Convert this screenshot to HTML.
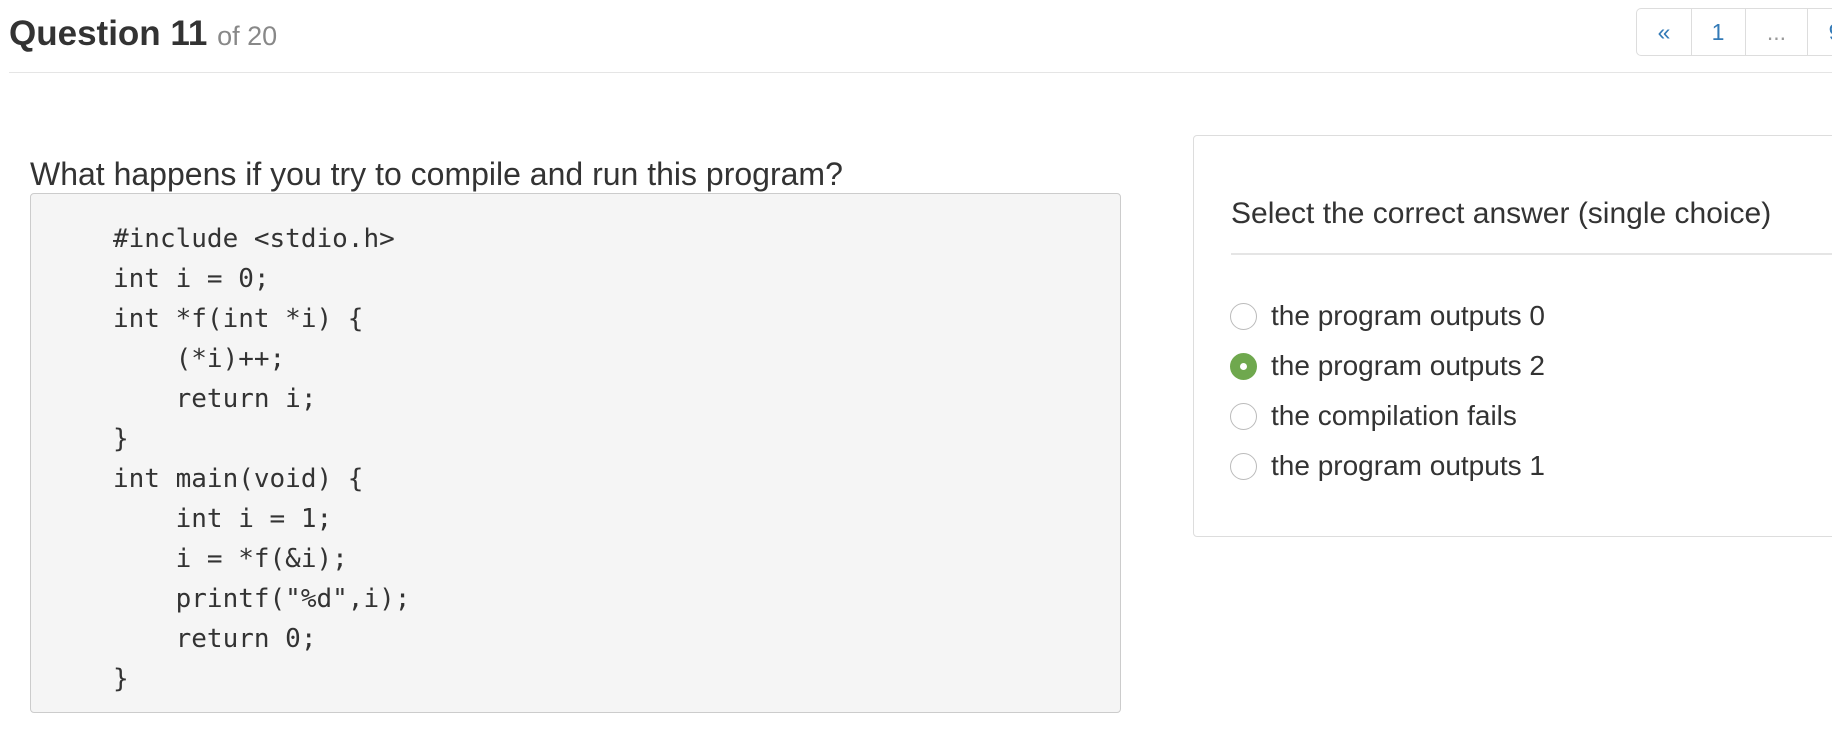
<!DOCTYPE html>
<html><head><style>
body{margin:0;width:1832px;height:738px;overflow:hidden;background:#fff;font-family:"Liberation Sans",Arial,sans-serif;color:#333;position:relative}
.a{position:absolute;white-space:nowrap}
.code{font-family:"DejaVu Sans Mono","Liberation Mono",monospace;font-size:26px;color:#333}
.r{position:absolute;left:1230px;width:25px;height:25px;border:1px solid #bbb;border-radius:50%;background:#fff}
.pg{position:absolute;top:8px;height:46px;border:1px solid #ddd;border-left:none;line-height:46px;text-align:center;font-size:23px;color:#337ab7}
.o{position:absolute;left:1271px;font-size:28px;line-height:30px;white-space:nowrap}
</style></head><body>
<div class="a" style="left:9px;top:14px;font-size:35px;font-weight:bold;color:#333">Question 11 <span style="font-weight:normal;font-size:27px;color:#888">of 20</span></div>
<div style="position:absolute;left:9px;right:0;top:72px;border-top:1px solid #e5e5e5"></div>
<div class="pg" style="left:1636px;width:54px;border-left:1px solid #ddd;border-radius:5px 0 0 5px">«</div>
<div class="pg" style="left:1691px;width:54px">1</div>
<div class="pg" style="left:1746px;width:61px;color:#999">...</div>
<div class="pg" style="left:1808px;width:54px">9</div>
<div class="a" style="left:30px;top:156px;font-size:32px;color:#333">What happens if you try to compile and run this program?</div>
<div style="position:absolute;left:30px;top:193px;width:1089px;height:518px;background:#f5f5f5;border:1px solid #ccc;border-radius:4px"></div>
<div class="a code" style="left:113px;top:219px;line-height:40px">#include &lt;stdio.h&gt;<br>int i = 0;<br>int *f(int *i) {<br>&nbsp;&nbsp;&nbsp;&nbsp;(*i)++;<br>&nbsp;&nbsp;&nbsp;&nbsp;return i;<br>}<br>int main(void) {<br>&nbsp;&nbsp;&nbsp;&nbsp;int i = 1;<br>&nbsp;&nbsp;&nbsp;&nbsp;i = *f(&amp;i);<br>&nbsp;&nbsp;&nbsp;&nbsp;printf("%d",i);<br>&nbsp;&nbsp;&nbsp;&nbsp;return 0;<br>}</div>
<div style="position:absolute;left:1193px;top:135px;width:700px;height:400px;border:1px solid #ddd;border-radius:4px"></div>
<div class="a" style="left:1231px;top:197px;font-size:30px">Select the correct answer (single choice)</div>
<div style="position:absolute;left:1231px;right:0;top:253px;border-top:2px solid #e5e5e5"></div>
<div class="r" style="top:303px"></div>
<div class="r" style="top:353px;background:#6fa84e;border-color:#6fa84e"><div style="position:absolute;left:9px;top:9px;width:7px;height:7px;border-radius:50%;background:#fff"></div></div>
<div class="r" style="top:403px"></div>
<div class="r" style="top:453px"></div>
<div class="o" style="top:301px">the program outputs 0</div>
<div class="o" style="top:351px">the program outputs 2</div>
<div class="o" style="top:401px">the compilation fails</div>
<div class="o" style="top:451px">the program outputs 1</div>
</body></html>
